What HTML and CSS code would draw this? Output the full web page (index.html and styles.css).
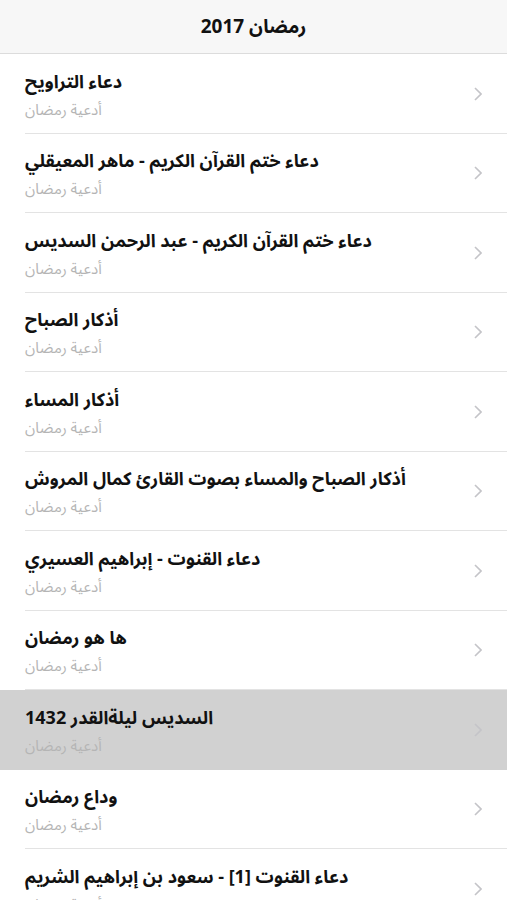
FILE: index.html
```html
<!DOCTYPE html>
<html lang="ar">
<head>
<meta charset="utf-8">
<link rel="stylesheet" href="styles.css">
</head>
<body>
<header class="nav"><h1 class="nav-title" dir="rtl">رمضان 2017</h1></header>
<ul class="list">
  <li class="row"><div class="text" dir="rtl"><div class="title">دعاء التراويح</div><div class="sub">أدعية رمضان</div></div><svg class="chev" viewBox="0 0 8 14"><path d="M1 1l6 6-6 6"/></svg></li>
  <li class="row"><div class="text" dir="rtl"><div class="title">دعاء ختم القرآن الكريم - ماهر المعيقلي</div><div class="sub">أدعية رمضان</div></div><svg class="chev" viewBox="0 0 8 14"><path d="M1 1l6 6-6 6"/></svg></li>
  <li class="row"><div class="text" dir="rtl"><div class="title">دعاء ختم القرآن الكريم - عبد الرحمن السديس</div><div class="sub">أدعية رمضان</div></div><svg class="chev" viewBox="0 0 8 14"><path d="M1 1l6 6-6 6"/></svg></li>
  <li class="row"><div class="text" dir="rtl"><div class="title">أذكار الصباح</div><div class="sub">أدعية رمضان</div></div><svg class="chev" viewBox="0 0 8 14"><path d="M1 1l6 6-6 6"/></svg></li>
  <li class="row"><div class="text" dir="rtl"><div class="title">أذكار المساء</div><div class="sub">أدعية رمضان</div></div><svg class="chev" viewBox="0 0 8 14"><path d="M1 1l6 6-6 6"/></svg></li>
  <li class="row"><div class="text" dir="rtl"><div class="title">أذكار الصباح والمساء بصوت القارئ كمال المروش</div><div class="sub">أدعية رمضان</div></div><svg class="chev" viewBox="0 0 8 14"><path d="M1 1l6 6-6 6"/></svg></li>
  <li class="row"><div class="text" dir="rtl"><div class="title">دعاء القنوت - إبراهيم العسيري</div><div class="sub">أدعية رمضان</div></div><svg class="chev" viewBox="0 0 8 14"><path d="M1 1l6 6-6 6"/></svg></li>
  <li class="row"><div class="text" dir="rtl"><div class="title">ها هو رمضان</div><div class="sub">أدعية رمضان</div></div><svg class="chev" viewBox="0 0 8 14"><path d="M1 1l6 6-6 6"/></svg></li>
  <li class="row selected"><div class="text" dir="rtl"><div class="title">السديس ليلةالقدر 1432</div><div class="sub">أدعية رمضان</div></div><svg class="chev" viewBox="0 0 8 14"><path d="M1 1l6 6-6 6"/></svg></li>
  <li class="row"><div class="text" dir="rtl"><div class="title">وداع رمضان</div><div class="sub">أدعية رمضان</div></div><svg class="chev" viewBox="0 0 8 14"><path d="M1 1l6 6-6 6"/></svg></li>
  <li class="row"><div class="text" dir="rtl"><div class="title">دعاء القنوت [1] - سعود بن إبراهيم الشريم</div><div class="sub">أدعية رمضان</div></div><svg class="chev" viewBox="0 0 8 14"><path d="M1 1l6 6-6 6"/></svg></li>
</ul>
</body>
</html>
```
FILE: styles.css
```css
html, body {
  margin: 0;
  padding: 0;
  background: #ffffff;
  font-family: "Noto Sans Arabic", "DejaVu Sans", "Liberation Sans", sans-serif;
  overflow: hidden;
}
.nav {
  height: 53px;
  background: #f7f7f7;
  border-bottom: 1px solid #dcdcdc;
  display: flex;
  align-items: center;
  justify-content: center;
}
.nav-title {
  margin: 0;
  font-size: 19px;
  font-weight: 700;
  color: #111;
  line-height: 24px;
}
.list {
  list-style: none;
  margin: 0;
  padding: 0;
}
.row {
  position: relative;
  height: 79.5px;
  box-sizing: border-box;
  display: flex;
  align-items: center;
  padding: 0 25px;
}
.row::after {
  content: "";
  position: absolute;
  left: 25px;
  right: 0;
  bottom: 0;
  height: 1px;
  background: #e3e3e3;
}
.row.selected {
  background: #d1d1d1;
}
.row.selected::after {
  left: 0;
  background: #d1d1d1;
}
.text {
  flex: 1;
  text-align: left;
  margin-top: 0.5px;
}
.title {
  font-size: 18px;
  font-weight: 700;
  color: #111;
  line-height: 24px;
}
.sub {
  margin-top: 7px;
  font-size: 15px;
  color: #b5b5b5;
  line-height: 18px;
}
.chev {
  width: 8px;
  height: 14px;
  flex: none;
}
.chev path {
  fill: none;
  stroke: #c4c4c8;
  stroke-width: 1.6;
}
```
